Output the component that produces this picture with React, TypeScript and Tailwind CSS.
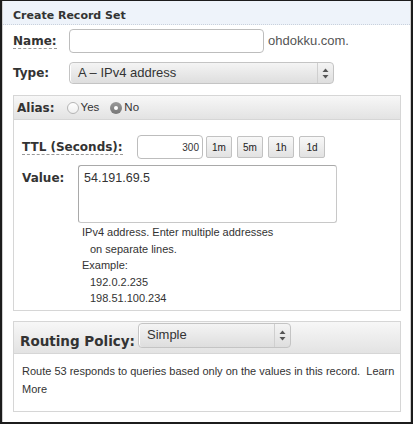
import React from "react";

const label = "font-['DejaVu_Sans',Verdana,sans-serif] font-bold text-[#333]";
const sans = "font-['Liberation_Sans',Arial,sans-serif]";

function Arrows() {
  return (
    <svg width="7" height="11" viewBox="0 0 7 11">
      <path d="M3.5 0.5L6.5 4H0.5Z" fill="#555" />
      <path d="M3.5 10.5L6.5 7H0.5Z" fill="#555" />
    </svg>
  );
}

function Select({ value, width, height }: { value: string; width: string; height: string }) {
  return (
    <div
      className={`${width} ${height} flex items-stretch rounded-[4px] border border-[#c4c4c4] bg-gradient-to-b from-[#f4f4f4] to-[#dedede] shadow-[inset_1px_0_0_#fff]`}
    >
      <div className={`flex-1 flex items-center pl-[8px] text-[13px] text-[#333] ${sans}`}>{value}</div>
      <div className="w-[16px] flex items-center justify-center border-l border-[#cfcfcf]">
        <Arrows />
      </div>
    </div>
  );
}

function Radio({ checked, text }: { checked?: boolean; text: string }) {
  return (
    <div className="flex items-center gap-[2px]">
      {checked ? (
        <span className="w-[12px] h-[12px] rounded-full bg-gradient-to-b from-[#9a9a9a] to-[#777] flex items-center justify-center">
          <span className="w-[4px] h-[4px] rounded-full bg-white" />
        </span>
      ) : (
        <span className="w-[12px] h-[12px] rounded-full border border-[#b5b5b5] bg-gradient-to-b from-white to-[#f0f0f0]" />
      )}
      <span className={`text-[11.5px] text-[#333] ${sans}`}>{text}</span>
    </div>
  );
}

export default function App() {
  const quick = ["1m", "5m", "1h", "1d"];
  return (
    <div className="w-[413px] h-[424px] bg-white border-t border-l-2 border-r-2 border-b-2 border-[#1c1c1c]">
      <div className="h-full border-l border-r border-[#cfcfcf]">
        {/* header */}
        <div className={`h-[24px] pt-[8px] pl-[10px] bg-[#eef3fa] border-b border-dotted border-[#c9d1dc] text-[11px] leading-[13px] ${label}`}>
          Create Record Set
        </div>

        <div className="pl-[10px] pr-[9px]">
          {/* name */}
          <div className="mt-[4px] flex items-center h-[24px]">
            <span className={`w-[56px] text-[12px] ${label}`}>
              <span className="border-b border-dashed border-[#999]">Name:</span>
            </span>
            <div className="w-[195px] h-[24px] rounded-[4px] border border-[#bdbdbd] bg-white" />
            <span className={`ml-[4px] text-[13px] text-[#555] ${sans}`}>ohdokku.com.</span>
          </div>

          {/* type */}
          <div className="mt-[9px] flex items-center h-[22px]">
            <span className={`w-[56px] text-[12px] ${label}`}>Type:</span>
            <Select value="A – IPv4 address" width="w-[265px]" height="h-[22px]" />
          </div>

          {/* alias box */}
          <div className="mt-[11px] border border-[#d6d6d6]">
            <div className="h-[24px] flex items-center pl-[3px] gap-[12px] border-b border-[#d6d6d6] bg-gradient-to-b from-[#f7f7f7] to-[#e3e3e3]">
              <span className={`text-[12px] ${label}`}>Alias:</span>
              <div className="flex items-center gap-[11px]">
                <Radio text="Yes" />
                <Radio checked text="No" />
              </div>
            </div>
            <div className="pl-[8px] pt-[15px] pb-[3px]">
              <div className="flex items-center h-[24px]">
                <span className={`w-[115px] text-[12px] ${label}`}>
                  <span className="border-b border-dashed border-[#999]">TTL (Seconds):</span>
                </span>
                <div className={`w-[66px] h-[24px] rounded-[4px] border border-[#bdbdbd] flex items-center justify-end pr-[3px] text-[10px] text-[#333] ${sans}`}>
                  300
                </div>
                <div className="ml-[3px] flex gap-[5px]">
                  {quick.map((q) => (
                    <div
                      key={q}
                      className={`w-[26px] h-[22px] rounded-[2px] border border-[#c2c2c2] bg-gradient-to-b from-[#f8f8f8] to-[#e2e2e2] flex items-center justify-center text-[10px] text-[#222] ${sans}`}
                    >
                      {q}
                    </div>
                  ))}
                </div>
              </div>

              <div className="mt-[6px] flex items-start">
                <span className={`w-[56px] pt-[4px] text-[12px] ${label}`}>Value:</span>
                <div className={`w-[259px] h-[58px] rounded-[3px] border border-[#a9a9a9] border-r-[#c8c8c8] border-b-[#c8c8c8] pl-[5px] pt-[3px] text-[12.5px] text-[#333] ${sans}`}>
                  54.191.69.5
                </div>
              </div>

              <div className={`mt-[1px] ml-[60px] text-[11px] leading-[16.5px] text-[#333] ${sans}`}>
                <div>IPv4 address. Enter multiple addresses</div>
                <div className="pl-[8px]">on separate lines.</div>
                <div>Example:</div>
                <div className="pl-[8px]">192.0.2.235</div>
                <div className="pl-[8px]">198.51.100.234</div>
              </div>
            </div>
          </div>

          {/* routing box */}
          <div className="mt-[10px] border border-[#d6d6d6]">
            <div className="h-[32px] flex items-start border-b border-[#d6d6d6] bg-gradient-to-b from-[#f7f7f7] to-[#e3e3e3]">
              <span className={`w-[124px] pl-[6px] pt-[11px] text-[13.5px] leading-[16px] ${label}`}>Routing Policy:</span>
              <div className="mt-[1px]">
                <Select value="Simple" width="w-[153px]" height="h-[25px]" />
              </div>
            </div>
            <div className={`pl-[8px] pr-[4px] pt-[8px] pb-[13px] text-[11px] leading-[18px] text-[#333] ${sans}`}>
              Route 53 responds to queries based only on the values in this record.&nbsp; Learn More
            </div>
          </div>
        </div>
      </div>
    </div>
  );
}
